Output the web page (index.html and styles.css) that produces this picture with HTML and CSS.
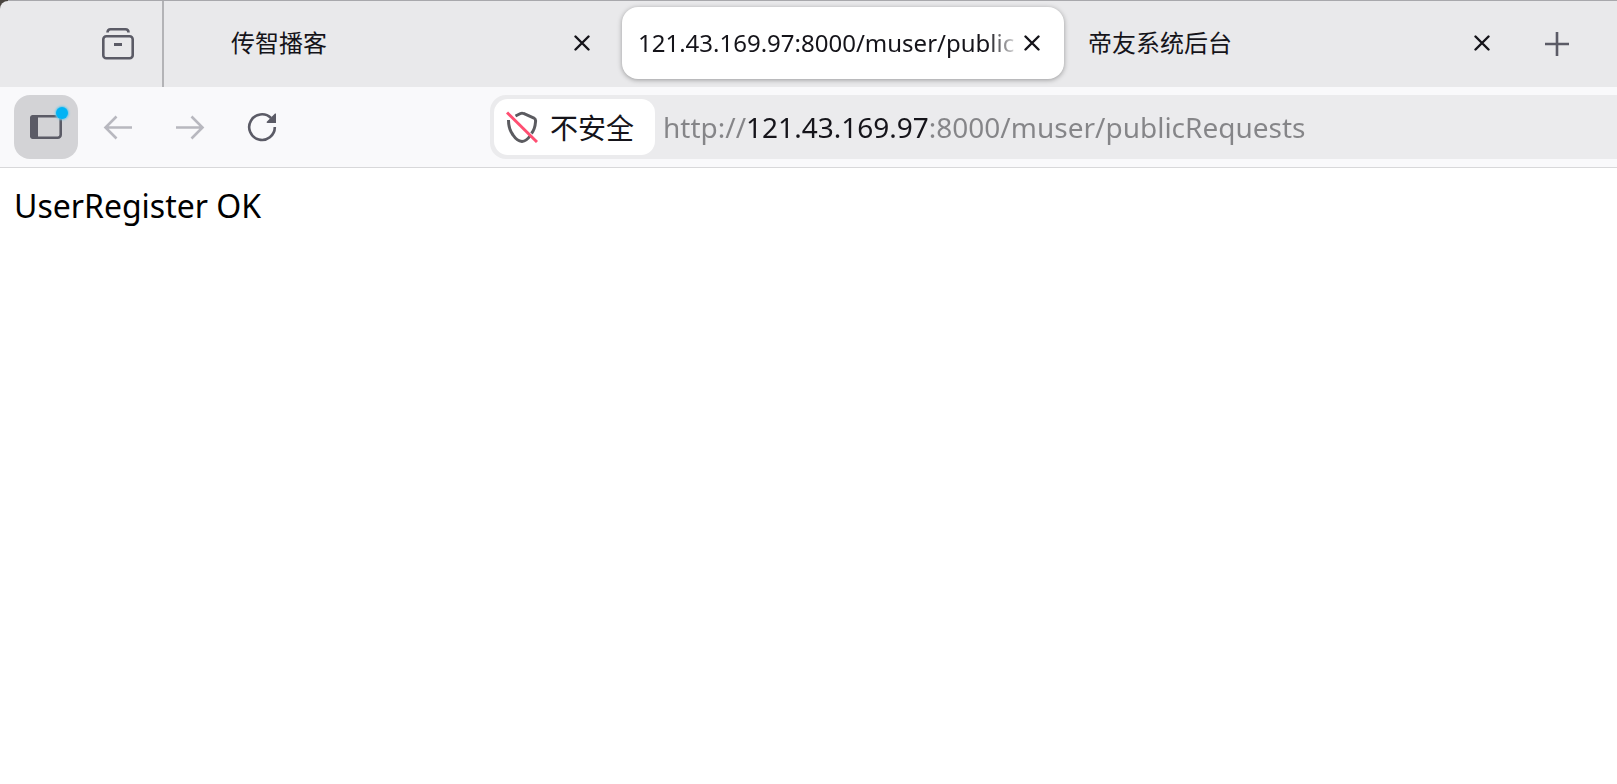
FILE: index.html
```html
<!DOCTYPE html>
<html lang="zh-CN">
<head>
    <meta charset="UTF-8">
    <meta name="viewport" content="width=device-width, initial-scale=1.0">
    <title>121.43.169.97:8000/muser/publicRequests</title>
    <link rel="stylesheet" href="styles.css">
</head>
<body>
    <header class="browser">
        <div class="tab-bar">
            <div class="view-area">
                <button type="button" class="icon-button" aria-label="Firefox View">
                    <svg class="icon" viewBox="0 0 32 32">
                        <path d="M5.500 4.500 C5.500 2.200 6.500 1.300 8.500 1.300 H23.500 C25.500 1.300 26.500 2.200 26.500 4.500"/>
                        <rect x="1.300" y="8.300" width="29.400" height="22" rx="3"/>
                        <path d="M12 16.500 H20" stroke-width="3"/>
                    </svg>
                </button>
            </div>
            <div class="tabs">
                <div class="tab">
                    <span class="favicon"></span>
                    <a href="#" class="tab-title">传智播客</a>
                    <button type="button" class="close" aria-label="关闭">
                        <svg viewBox="0 0 16 16"><path d="M1.500 1.500 L14.500 14.500 M14.500 1.500 L1.500 14.500"/></svg>
                    </button>
                </div>
                <div class="tab active">
                    <a href="#" class="tab-title">121.43.169.97:8000/muser/public</a>
                    <button type="button" class="close" aria-label="关闭">
                        <svg viewBox="0 0 16 16"><path d="M1.500 1.500 L14.500 14.500 M14.500 1.500 L1.500 14.500"/></svg>
                    </button>
                </div>
                <div class="tab">
                    <a href="#" class="tab-title">帝友系统后台</a>
                    <button type="button" class="close" aria-label="关闭">
                        <svg viewBox="0 0 16 16"><path d="M1.500 1.500 L14.500 14.500 M14.500 1.500 L1.500 14.500"/></svg>
                    </button>
                </div>
                <button type="button" class="icon-button new-tab" aria-label="新建标签页">
                    <svg class="icon" viewBox="0 0 32 32"><path d="M16 5 V29 M4 17 H28"/></svg>
                </button>
            </div>
        </div>

        <div class="toolbar">
            <button type="button" class="icon-button sidebar" aria-label="侧栏">
                <svg class="icon" viewBox="0 0 32 32">
                    <rect x="1.300" y="5.300" width="29.400" height="21.400" rx="3"/>
                    <path class="fill" d="M3 4 H8 V28 H3 C1 28 0 27 0 25 V7 C0 5 1 4 3 4 Z"/>
                </svg>
                <span class="badge"></span>
            </button>
            <button type="button" class="icon-button" aria-label="后退" disabled>
                <svg class="icon" viewBox="0 0 32 32"><path d="M30 16.500 H3.500 M14.500 5.500 L3.500 16.500 L14.500 27.500"/></svg>
            </button>
            <button type="button" class="icon-button" aria-label="前进" disabled>
                <svg class="icon" viewBox="0 0 32 32"><path d="M2 16.500 H28.500 M17.500 5.500 L28.500 16.500 L17.500 27.500"/></svg>
            </button>
            <button type="button" class="icon-button" aria-label="重新载入">
                <svg class="icon" viewBox="0 0 32 32">
                    <path d="M25 7 A12.800 12.800 0 1 0 28.800 16"/>
                    <path class="fill" d="M30 3 V12 H21.500 C20.500 12 20.300 11.200 21 10.500 L28.500 3 C29.200 2.300 30 2.500 30 3 Z"/>
                </svg>
            </button>
            <div class="url-bar">
                <button type="button" class="identity">
                    <svg class="icon shield" viewBox="0 0 32 32">
                        <path d="M9.500 5 L14.500 2.500 Q16 1.800 17.500 2.500 L28 7 Q30 8 29.500 11 Q29 18 25.500 22.500 M24 25 Q20.500 30 16 30.500 Q11 30 7 24 Q2.500 18 2.500 9"/>
                        <path class="strike" d="M1 1.500 L31 31"/>
                    </svg>
                    <span>不安全</span>
                </button>
                <input type="text" class="url" aria-label="网址" value="http://121.43.169.97:8000/muser/publicRequests">
            </div>
        </div>
    </header>

    <main class="page">UserRegister OK</main>
</body>
</html>
```

FILE: styles.css
```css
body {
    margin: 0;
    background-color: #fff;
    color: #000;
    font-family: 'Noto Sans', 'Noto Sans CJK SC', sans-serif;
}

button {
    padding: 0;
    border: none;
    background: none;
    color: inherit;
    font: inherit;
}

.browser {
    overflow: hidden;
    background: linear-gradient(to right, #4a4540 8px, #a8a8ac 8px);
    padding-top: 1px;
    color: #15141a;
}

.tab-bar {
    display: flex;
    height: 86px;
    background-color: #e9e9eb;
    border-top-left-radius: 8px;
}

.view-area {
    display: flex;
    align-items: center;
    padding-left: 86px;
    padding-right: 12px;
    border-right: 2px solid #b3b3b6;
}

.icon-button {
    display: flex;
    flex: none;
    align-items: center;
    justify-content: center;
    position: relative;
    width: 64px;
    height: 64px;
    border-radius: 16px;
    color: #5b5b66;
}

.icon-button:disabled {
    color: #b8b8bf;
}

.icon {
    display: block;
    width: 32px;
    height: 32px;
    fill: none;
    stroke: currentColor;
    stroke-width: 2.6;
}

.icon .fill {
    fill: currentColor;
    stroke: none;
}

.tabs {
    display: flex;
    flex: 1;
    align-items: center;
    gap: 8px;
    min-width: 0;
    padding: 0 8px 2px;
}

.tab {
    display: flex;
    flex: 0 1 442px;
    align-items: center;
    box-sizing: border-box;
    min-width: 0;
    height: 72px;
    padding: 0 24px 0 16px;
    border-radius: 16px;
}

.tab.active {
    background-color: #fff;
    box-shadow: 0 1px 5px rgba(0, 0, 0, 0.35);
}

.new-tab {
    margin-left: 3px;
}

.favicon {
    flex: none;
    width: 32px;
    height: 32px;
    margin-right: 11px;
}

.tab-title {
    flex: 1;
    min-width: 0;
    overflow: hidden;
    white-space: nowrap;
    color: inherit;
    text-decoration: none;
    font-size: 24px;
    line-height: 40px;
}

.active .tab-title {
    -webkit-mask-image: linear-gradient(to left, transparent, #000 32px);
    mask-image: linear-gradient(to left, transparent, #000 32px);
}

.close {
    flex: none;
    width: 16px;
    height: 16px;
    margin-left: 4px;
}

.close svg {
    display: block;
    fill: none;
    stroke: currentColor;
    stroke-width: 2.4;
    stroke-linecap: round;
}

.toolbar {
    display: flex;
    align-items: center;
    gap: 8px;
    height: 80px;
    padding-left: 14px;
    background-color: #f9f9fb;
    border-bottom: 1px solid #d8d8da;
}

.sidebar {
    background-color: #d3d3d6;
}

.badge {
    position: absolute;
    top: 12px;
    right: 10px;
    width: 12px;
    height: 12px;
    border-radius: 50%;
    background-color: #00b3f4;
    box-shadow: 0 0 2px 1px #6cc8ea;
}

.url-bar {
    display: flex;
    flex: 1;
    align-items: center;
    box-sizing: border-box;
    min-width: 0;
    height: 64px;
    margin-left: 188px;
    padding: 4px 0 4px 4px;
    border-radius: 16px 0 0 16px;
    background-color: #ebebed;
}

.identity {
    display: flex;
    flex: none;
    align-items: center;
    gap: 12px;
    height: 56px;
    padding: 0 21px 0 12px;
    border-radius: 14px;
    background-color: #fff;
    font-size: 28px;
}

.shield {
    stroke: #5b5b60;
    stroke-width: 3;
}

.shield .strike {
    stroke: #ff4f72;
}

.url {
    flex: 1;
    min-width: 0;
    height: 56px;
    padding: 0 0 0 8px;
    border: none;
    outline: none;
    /* host part of the address is darker than the rest */
    background: linear-gradient(to right, #858588 92px, #15141a 92px, #15141a 273px, #858588 273px);
    -webkit-background-clip: text;
    background-clip: text;
    color: transparent;
    font-family: inherit;
    font-size: 28px;
}

.page {
    padding: 14px;
    font-size: 32px;
    line-height: 48px;
}
```
